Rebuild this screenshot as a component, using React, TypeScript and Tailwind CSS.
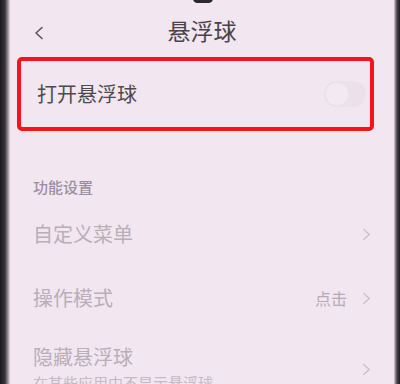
import React from 'react';

const font = { fontFamily: '"Noto Sans CJK SC", "Noto Sans", sans-serif' };

const Chevron = ({ className = '' }: { className?: string }) => (
  <svg viewBox="0 0 10 14" className={className} fill="none" stroke="currentColor" strokeWidth="1.6" strokeLinecap="round" strokeLinejoin="round">
    <path d="M2 1.5 L8 7 L2 12.5" />
  </svg>
);

const Row = ({ title, value, sub }: { title: string; value?: string; sub?: string }) => (
  <div className="flex items-center justify-between">
    <div className="flex flex-col">
      <span className="text-[20px] leading-[26px] text-[#b9aeb9]">{title}</span>
      {sub && <span className="text-[15px] leading-[22px] text-[#c4b9c4] mt-[2px]">{sub}</span>}
    </div>
    <div className="flex items-center gap-[15px]">
      {value && <span className="text-[16px] text-[#b5aab5]">{value}</span>}
      <Chevron className="w-[9px] h-[13px] text-[#cbc1cb]" />
    </div>
  </div>
);

export default function App() {
  return (
    <div className="w-[400px] h-[384px] overflow-hidden flex bg-[#f2e6f0]" style={font}>
      {/* phone edge left */}
      <div className="w-[10px] shrink-0 bg-gradient-to-r from-[#1a1a1e] via-[#3a353c] to-[#e6dae4]" />

      <div className="flex-1 flex flex-col relative">
        {/* camera cutout */}
        <div className="absolute left-[183px] top-[-6px] w-[20px] h-[9px] rounded-full bg-[#2a2830]" />

        {/* Header */}
        <header className="h-[57px] shrink-0 flex items-center relative">
          <Chevron className="absolute left-[24px] top-[26px] w-[10px] h-[14px] text-[#5c555c] rotate-180" />
          <h1 className="w-full text-center text-[23px] text-[#48424a] pt-[4px]">悬浮球</h1>
        </header>

        {/* Highlighted toggle row */}
        <div className="ml-[7px] mr-[20px] h-[74px] shrink-0 border-[4px] border-[#f5141a] rounded-[5px] flex items-center justify-between pl-[16px] pr-[4px]">
          <span className="text-[20px] text-[#4f484f]">打开悬浮球</span>
          <div className="w-[42px] h-[26px] rounded-full bg-[#ece1ea] flex items-center pl-[2px]">
            <div className="w-[22px] h-[22px] rounded-full bg-[#f3eaf1]" />
          </div>
        </div>

        <div className="mt-[13px] ml-[23px] mr-[26px] h-px bg-[#e6dbe4]" />

        <div className="flex flex-col pl-[23px] pr-[23px]">
          <div className="pt-[33px] text-[15px] leading-[20px] text-[#9a8fa0] font-medium">功能设置</div>
          <div className="pt-[24px]">
            <Row title="自定义菜单" />
          </div>
          <div className="pt-[38px]">
            <Row title="操作模式" value="点击" />
          </div>
          <div className="pt-[33px]">
            <Row title="隐藏悬浮球" sub="在某些应用中不显示悬浮球" />
          </div>
        </div>
      </div>

      {/* phone edge right */}
      <div className="w-[6px] shrink-0 bg-gradient-to-r from-[#d8ccd6] via-[#4a4550] to-[#1a1a1e]" />
    </div>
  );
}
